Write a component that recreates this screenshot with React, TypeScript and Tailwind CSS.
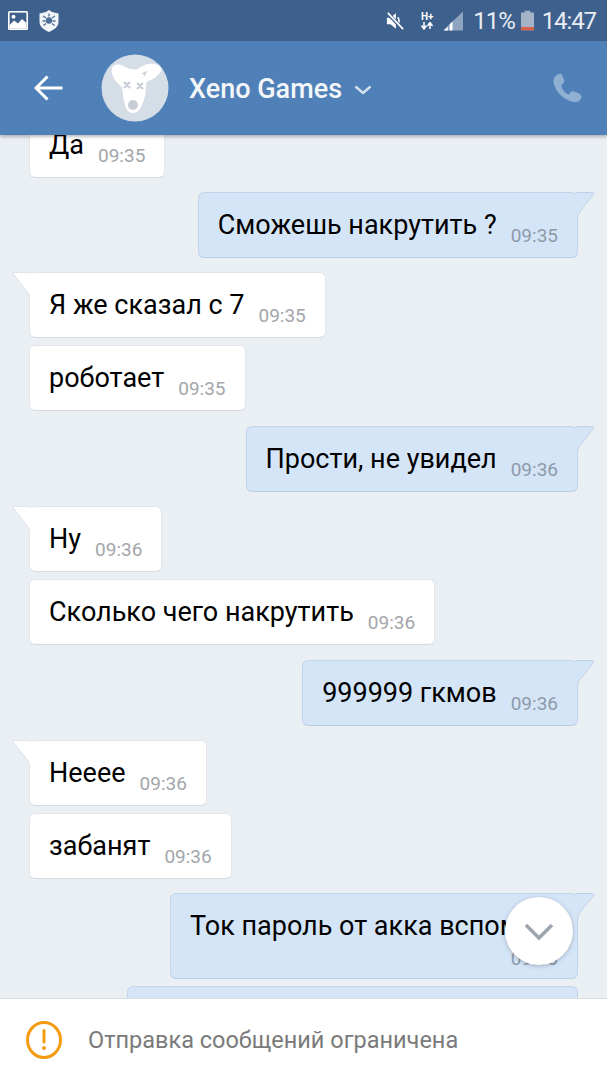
const font = { fontFamily: 'Roboto, sans-serif' }

type Msg = { text: string; time: string; out?: boolean; tail?: boolean; top: string }

const messages: Msg[] = [
  { text: 'Да', time: '09:35', top: 'mt-0' },
  { text: 'Сможешь накрутить ?', time: '09:35', out: true, tail: true, top: 'mt-[14px]' },
  { text: 'Я же сказал с 7', time: '09:35', tail: true, top: 'mt-[14px]' },
  { text: 'роботает', time: '09:35', top: 'mt-[7px]' },
  { text: 'Прости, не увидел', time: '09:36', out: true, tail: true, top: 'mt-[15px]' },
  { text: 'Ну', time: '09:36', tail: true, top: 'mt-[14px]' },
  { text: 'Сколько чего накрутить', time: '09:36', top: 'mt-[7px]' },
  { text: '999999 гкмов', time: '09:36', out: true, tail: true, top: 'mt-[15px]' },
  { text: 'Неееe', time: '09:36', tail: true, top: 'mt-[14px]' },
  { text: 'забанят', time: '09:36', top: 'mt-[7px]' },
]

function Tail({ out }: { out?: boolean }) {
  if (out) {
    return (
      <svg className="absolute top-[-1px] right-[-18px]" width="19" height="28" viewBox="0 0 19 28">
        <path d="M0 1H16.5Q18 1 17 2.5L3 20Q1 23 1 27H0Z" fill="#d5e5f8" />
        <path d="M0 .5H16.5Q18.5 .5 17.4 2.5L3.4 20.3Q1.5 23 1.5 27" fill="none" stroke="#bed1e7" />
      </svg>
    )
  }
  return (
    <svg className="absolute top-[-1px] left-[-18px]" width="19" height="28" viewBox="0 0 19 28">
      <path d="M19 1H2.5Q1 1 2 2.5L16 20Q18 23 18 27H19Z" fill="#fff" />
      <path d="M19 .5H2.5Q.5 .5 1.6 2.5L15.6 20.3Q17.5 23 17.5 27" fill="none" stroke="#dfe4ea" />
    </svg>
  )
}

function Bubble({ text, time, out, tail, top }: Msg) {
  return (
    <div
      className={`relative flex h-[66px] gap-[14px] rounded-[6px] border px-[19px] ${top} ${
        out
          ? 'self-end mr-[29px] bg-[#d5e5f8] border-[#c3d5ea] border-b-[#b9cde4]'
          : 'self-start ml-[29px] bg-white border-[#e2e6eb] border-b-[#d6dbe2]'
      }`}
    >
      {tail && <Tail out={out} />}
      <span className="pt-[17px] text-[27px] leading-[30px] text-black">{text}</span>
      <span className={`pt-[32px] text-[19px] leading-[22px] ${out ? 'text-[#8d9aa9]' : 'text-[#a3a6aa]'}`}>{time}</span>
    </div>
  )
}

function DogAvatar() {
  return (
    <svg width="68" height="68" viewBox="0 0 68 68" className="shrink-0">
      <circle cx="34" cy="34" r="33.5" fill="#d5dde7" />
      <path
        d="M11 14C13 9 20 10 24 13C28 15 33 16 37 15C41 11 48 9 53 10C58 11 62 13 60 17C57 22 52 26 47 27C46 28 45 30 45 32C45 38 44 45 41 51C39 56 36 59 32 59C28 59 25 56 24 51C22 44 22 39 21 33C16 30 9 21 11 14Z"
        fill="#fff"
      />
      <circle cx="32" cy="51" r="5" fill="#c6cdd7" />
      <path d="M23 28L29 34M29 28L23 34M36 29L42 35M42 29L36 35" stroke="#c6cdd7" strokeWidth="2.2" />
      <path d="M41 20L45 18L43 22" stroke="#c6cdd7" strokeWidth="1.2" fill="none" />
    </svg>
  )
}

function StatusBar() {
  return (
    <div className="flex h-[41px] items-center bg-[#3e608c] pl-2 pr-[11px] text-[#e9eef4]">
      <svg width="20" height="19" viewBox="0 0 20 19">
        <rect width="20" height="19" rx="1.5" fill="#fff" />
        <rect x="1.6" y="1.6" width="16.8" height="15.8" fill="#3e608c" />
        <circle cx="5.5" cy="5.8" r="2" fill="#fff" />
        <path d="M1.6 14L6 9.5L10 12.5L14 8L18.4 12V17.4H1.6Z" fill="#fff" />
      </svg>
      <svg width="20" height="22" viewBox="0 0 20 22" className="ml-[11px]">
        <path d="M10 0L13 2L19.5 3.5V12C19.5 17 14.5 20 10 22C5.500 20 .5 17 .5 12V3.500L7 2Z" fill="#f2f5f8" />
        <circle cx="10" cy="10.500" r="3.200" fill="#4f6f96" />
        <path d="M4 6L7 8M16 6L13 8M3.500 11H6.500M16.500 11H13.500M4.500 15.500L7 13.500M15.500 15.500L13 13.500M10 3.500V6.500" stroke="#4f6f96" strokeWidth="1.300" />
      </svg>
      <svg width="18" height="20" viewBox="0 0 20 20" className="ml-auto">
        <path d="M1 6.500H5L11 1.500V18.500L5 13.500H1Z" fill="#fff" />
        <path d="M13 6C15 8 15 12 13 14" stroke="#fff" strokeWidth="1.800" fill="none" />
        <path d="M1.500 1L18.500 19" stroke="#3e608c" strokeWidth="4" />
        <path d="M2 1L19 19" stroke="#fff" strokeWidth="1.800" />
      </svg>
      <div className="ml-[16px] flex w-[14px] flex-col items-center">
        <span className="text-[10px] leading-[11px] font-bold text-white">H+</span>
        <svg width="14" height="8" viewBox="0 0 14 8">
          <path d="M4 0V5M1.500 3.500L4 7L6.500 3.500M10 7V2M7.500 4L10 .5L12.500 4" stroke="#fff" strokeWidth="1.500" fill="none" />
        </svg>
      </div>
      <svg width="20" height="20" viewBox="0 0 21 20" className="ml-[9px]">
        <path d="M21 0V20H0Z" fill="#8ea4c0" />
        <path d="M1 20L5 16V20ZM7 20V13.500L10 10.500V20Z" fill="#fff" />
      </svg>
      <span className="ml-[10px] text-[24px] leading-[30px] tracking-[-1px]">11%</span>
      <svg width="13" height="21" viewBox="0 0 14 21" className="ml-[6px]">
        <path d="M4 0H10V2H14V21H0V2H4Z" fill="#a4b3c6" />
        <rect y="17.500" width="14" height="3.500" fill="#d9634a" />
      </svg>
      <span className="ml-[8px] text-[24px] leading-[30px] tracking-[-1.1px]">14:47</span>
    </div>
  )
}

function Header() {
  return (
    <div className="relative z-10 flex h-[94px] items-center bg-[#5080b8] pl-[34px] pr-[25px] shadow-[0_2px_3px_rgba(0,0,0,0.25)]">
      <svg width="29" height="26" viewBox="0 0 29 26" fill="none" stroke="#fff" strokeWidth="3">
        <path d="M28.500 13H2.500M13.500 1.500L2 13L13.500 24.500" />
      </svg>
      <div className="ml-[38px]">
        <DogAvatar />
      </div>
      <span className="ml-5 mt-[1px] text-[27px] leading-[30px] font-medium text-[#f4f7fa]">Xeno Games</span>
      <svg width="18" height="10" viewBox="0 0 18 10" className="ml-[12px] mt-[3px]" fill="none" stroke="#d6e1ee" strokeWidth="2.400">
        <path d="M1.500 1.500L9 8L16.500 1.500" />
      </svg>
      <svg width="30" height="30" viewBox="0 0 30 30" className="ml-auto">
        <path
          d="M7 1C4 2 1 5 1.500 9C3 18 11 27 22 29C26 29.500 29 27 29.500 24C29.500 22 28 21 26 20L22 18.500C20 18 19 18.500 18 20C17 21.500 16 21.500 14.500 20.500C12 18.500 10.500 16.500 9.500 14C9 12.500 9.500 12 10.500 11C12 10 12.500 8.500 12 7L10.500 3C10 1.500 8.500 .5 7 1Z"
          fill="#8fb0d3"
        />
      </svg>
    </div>
  )
}

export default function App() {
  return (
    <div className="flex h-[1080px] w-[607px] flex-col overflow-hidden bg-[#eaeff4]" style={font}>
      <StatusBar />
      <Header />
      <div className="relative min-h-0 flex-1 overflow-hidden">
        <div className="mt-[-23px] flex flex-col">
          {messages.map((m, i) => (
            <Bubble key={i} {...m} />
          ))}
          <div className="relative mt-[14px] mr-[29px] h-[86px] w-[408px] self-end rounded-[6px] border border-[#c3d5ea] border-b-[#b9cde4] bg-[#d5e5f8] pt-[17px] pl-[19px]">
            <Tail out />
            <span className="block whitespace-nowrap text-[27px] leading-[30px] text-black">Ток пароль от акка вспомню</span>
            <span className="absolute right-[19px] bottom-[8px] text-[19px] leading-[22px] text-[#8d9aa9]">09:36</span>
          </div>
          <div className="mt-[7px] mr-[29px] h-[66px] w-[451px] self-end rounded-[6px] border border-[#c3d5ea] bg-[#d5e5f8]" />
        </div>
        <div className="absolute top-[762px] left-[505px] flex h-[68px] w-[68px] items-center justify-center rounded-full bg-white shadow-[0_1px_4px_rgba(0,0,0,0.25)]">
          <svg width="30" height="18" viewBox="0 0 30 18" className="mt-[2px]" fill="none" stroke="#9ea5ae" strokeWidth="3.500">
            <path d="M2 2L15 15L28 2" />
          </svg>
        </div>
      </div>
      <div className="relative z-10 flex h-[82px] items-center border-t border-[#d9dee4] bg-white pl-[26px]">
        <svg width="36" height="38" viewBox="0 0 36 38" fill="none">
          <ellipse cx="18" cy="19" rx="16.500" ry="17.500" stroke="#f39c12" strokeWidth="3" />
          <path d="M18 9.500V21" stroke="#f39c12" strokeWidth="3" strokeLinecap="round" />
          <circle cx="18" cy="27" r="2" fill="#f39c12" />
        </svg>
        <span className="ml-[26px] text-[23.500px] leading-[28px] text-[#7a7a7a]">Отправка сообщений ограничена</span>
      </div>
    </div>
  )
}
